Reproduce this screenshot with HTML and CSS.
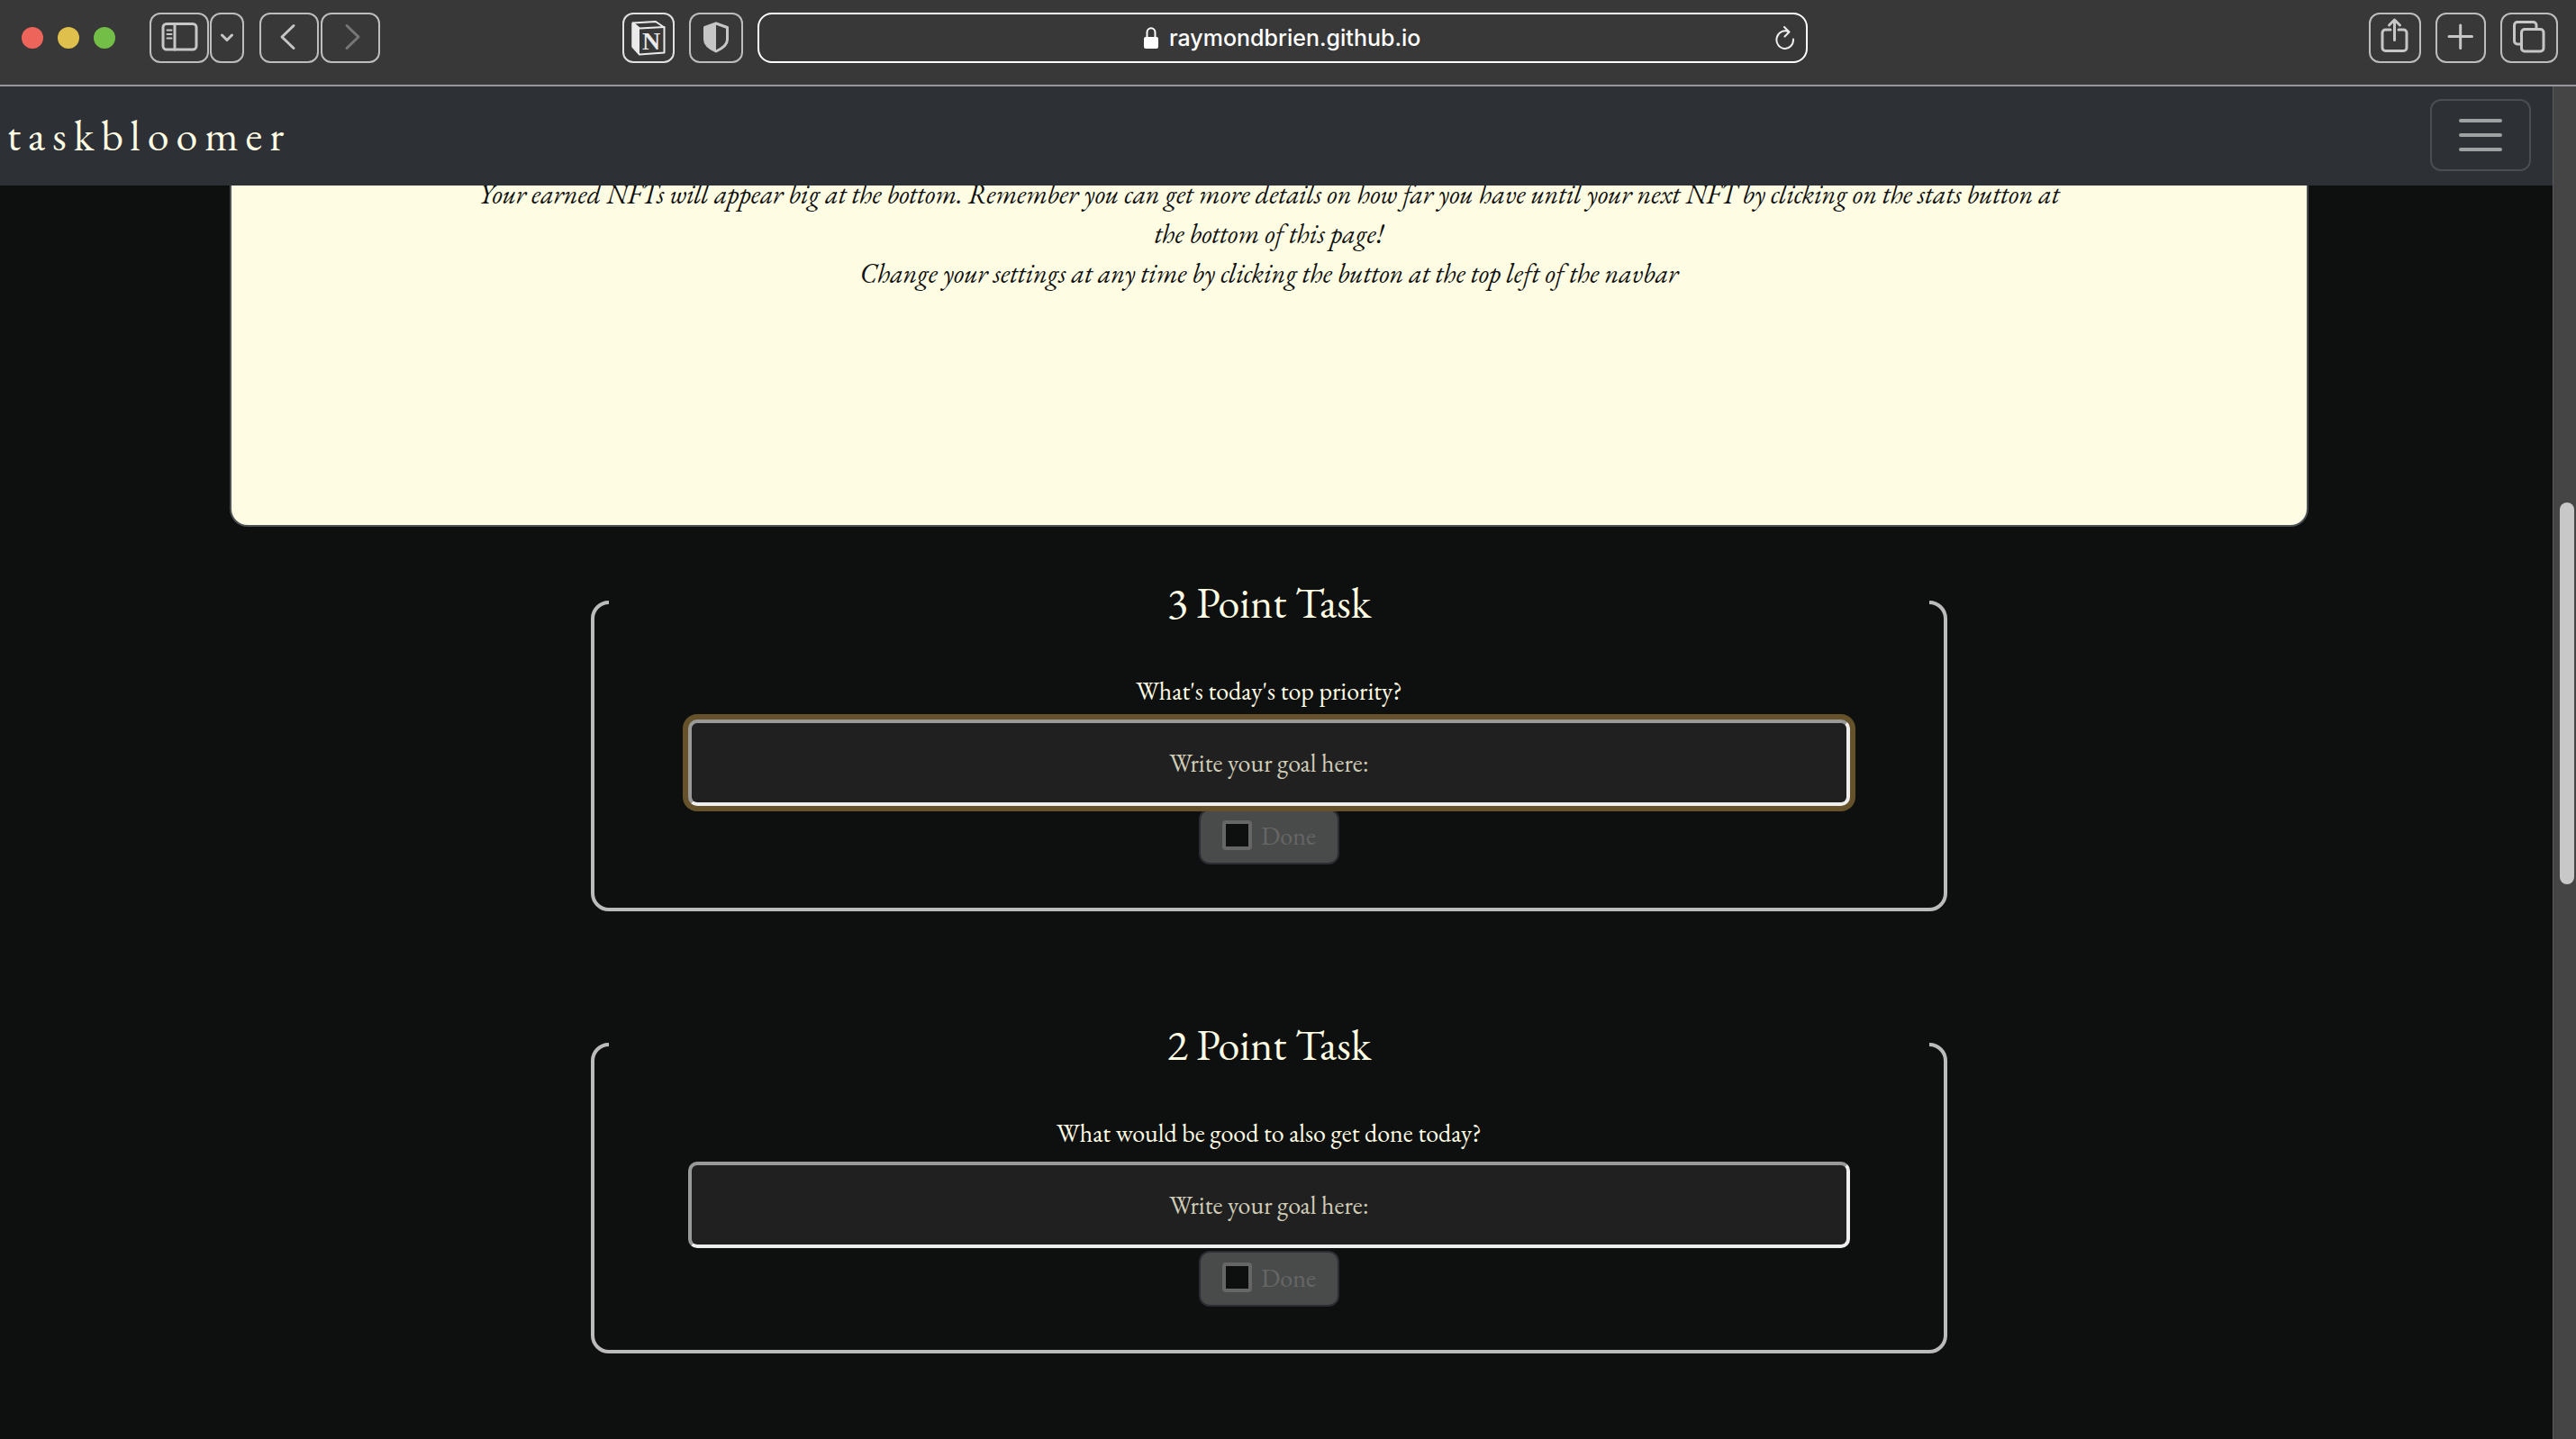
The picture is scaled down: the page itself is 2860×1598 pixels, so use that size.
FILE: index.html
```html
<!DOCTYPE html>
<html lang="en">
<head>
<meta charset="utf-8">
<meta name="viewport" content="width=device-width, initial-scale=1">
<title>taskbloomer</title>
<link rel="stylesheet" href="styles.css">
</head>
<body>
<header class="toolbar">
  <div class="toolbar-group toolbar-start">
    <div class="lights">
      <span class="light light-close"></span>
      <span class="light light-minimise"></span>
      <span class="light light-zoom"></span>
    </div>
    <div class="button-pair sidebar-pair">
      <button class="tool tool-wide" type="button" aria-label="Show sidebar">
        <svg width="62" height="52" viewBox="0 0 62 52"><rect x="13" y="10.500" width="37" height="28.500" rx="4"/><path d="M26 10.500V39"/><path class="thin" d="M17.500 17.500h5M17.500 22h5M17.500 26.500h5"/></svg>
      </button>
      <button class="tool tool-slim" type="button" aria-label="Tab groups">
        <svg width="34" height="52" viewBox="0 0 34 52"><path d="M11.500 23l5.500 5.500 5.500-5.500"/></svg>
      </button>
    </div>
    <div class="button-pair history-pair">
      <button class="tool tool-wide" type="button" aria-label="Back">
        <svg width="62" height="52" viewBox="0 0 62 52"><path d="M36 12.500L23 25l13 12.500"/></svg>
      </button>
      <button class="tool tool-wide tool-off" type="button" aria-label="Forward">
        <svg width="62" height="52" viewBox="0 0 62 52"><path d="M27 12.500L40 25 27 37.500"/></svg>
      </button>
    </div>
  </div>
  <div class="toolbar-group toolbar-centre">
    <button class="tool tool-notion" type="button" aria-label="Notion">
      <svg width="54" height="52" viewBox="0 0 54 52"><path d="M9.500 9.500L35 8l9.500 6.500V42.500L17 44.500 9.500 36z"/><path class="solid" d="M8.500 9.500L17 15v30L8.500 36z"/><path d="M10 9.500l7 6 27.500-1.500"/><text class="notion-n" x="20" y="39">N</text></svg>
    </button>
    <button class="tool tool-shield" type="button" aria-label="Privacy report">
      <svg width="56" height="52" viewBox="0 0 56 52"><path d="M28 10l12.500 4.500V28c0 6-6 10-12.500 13C21.500 38 15.500 34 15.500 28V14.500z"/><path class="solid" d="M28 10v31C21.500 38 15.500 34 15.500 28V14.500z"/></svg>
    </button>
    <form class="address">
      <label class="address-field">
        <svg class="lock" width="16" height="24" viewBox="0 0 16 24" aria-label="Secure"><rect class="solid" x="0" y="11" width="16" height="13" rx="2"/><path d="M3.500 11V6a4.500 4.800 0 0 1 9 0V11"/></svg>
        <input class="address-input" type="text" value="raymondbrien.github.io" aria-label="Address">
      </label>
      <button class="reload" type="button" aria-label="Reload">
        <svg width="22" height="26" viewBox="0 0 22 26"><path d="M20 14.500A9.300 9.800 0 1 1 15 6.500M10 1l5.500 5.500L10.500 11.500"/></svg>
      </button>
    </form>
  </div>
  <div class="toolbar-group toolbar-end">
    <button class="tool tool-share" type="button" aria-label="Share">
      <svg width="54" height="52" viewBox="0 0 54 52"><path d="M22 17h-5.500a3.500 3.500 0 0 0-3.500 3.500V37a3.500 3.500 0 0 0 3.500 3.500h20A3.500 3.500 0 0 0 40 37V20.500a3.500 3.500 0 0 0-3.500-3.500H31M26.500 28.500V6.500M20.500 12l6-6 6 6"/></svg>
    </button>
    <button class="tool tool-plus" type="button" aria-label="New tab">
      <svg width="52" height="52" viewBox="0 0 52 52"><path d="M13 24.500h25.500M25.700 12v25.500"/></svg>
    </button>
    <button class="tool tool-tabs" type="button" aria-label="Tab overview">
      <svg width="60" height="52" viewBox="0 0 60 52"><rect x="21.500" y="16.500" width="24.500" height="24.500" rx="3.500"/><path d="M21 33h-4a3.500 3.500 0 0 1-3.500-3.500V12A3.500 3.500 0 0 1 17 8.500h17.500A3.500 3.500 0 0 1 38 12v4"/></svg>
    </button>
  </div>
</header>

<div class="viewport">
  <div class="page">
    <nav class="navbar">
      <a class="brand" href="#">taskbloomer</a>
      <button class="toggler" type="button" aria-label="Toggle navigation">
        <span class="bar"></span><span class="bar"></span><span class="bar"></span>
      </button>
    </nav>
    <main class="content">
      <section class="intro">
        <p class="intro-text">Your earned NFTs will appear big at the bottom. Remember you can get more details on how far you have until your next NFT by clicking on the stats button at the bottom of this page!</p>
        <p class="intro-text">Change your settings at any time by clicking the button at the top left of the navbar</p>
      </section>

      <form class="tasks">
        <fieldset class="task">
          <legend class="task-title">3 Point Task</legend>
          <div class="task-body">
            <label class="task-label" for="goal-3">What's today's top priority?</label>
            <input class="task-input is-active" id="goal-3" type="text" placeholder="Write your goal here:">
            <label class="done"><input class="done-box" type="checkbox" disabled>Done</label>
          </div>
        </fieldset>
        <fieldset class="task">
          <legend class="task-title">2 Point Task</legend>
          <div class="task-body">
            <label class="task-label" for="goal-2">What would be good to also get done today?</label>
            <input class="task-input" id="goal-2" type="text" placeholder="Write your goal here:">
            <label class="done"><input class="done-box" type="checkbox" disabled>Done</label>
          </div>
        </fieldset>
      </form>
    </main>
  </div>
  <div class="scrollbar"><div class="thumb"></div></div>
</div>
</body>
</html>
```
FILE: styles.css
```css
:root {
  --serif: "EB Garamond", "Liberation Serif", serif;
  --sans: Inter, "Liberation Sans", sans-serif;
  --cream: #fffce4;
  --ink: #0e100f;
  --tool: #bdbdbd;
}

* {
  box-sizing: border-box;
}

body {
  display: flex;
  flex-direction: column;
  height: 100vh;
  margin: 0;
  overflow: hidden;
  background: var(--ink);
  color: var(--cream);
  font-family: var(--serif);
}

button,
input {
  margin: 0;
  padding: 0;
  font: inherit;
}

svg {
  display: block;
  fill: none;
  stroke: currentColor;
  stroke-width: 3;
  stroke-linecap: round;
  stroke-linejoin: round;
}

/* Browser toolbar */
.toolbar {
  display: grid;
  grid-template-columns: 667fr 1316fr 833fr;
  flex: none;
  padding: 14px 20px 24px 24px;
  border-bottom: 2px solid #98959b;
  background: #383838;
}

.toolbar-group {
  display: flex;
  align-items: center;
}

.toolbar-centre,
.toolbar-end {
  gap: 16px;
}

.toolbar-end {
  justify-content: flex-end;
}

.lights {
  display: flex;
  gap: 16px;
}

.light {
  width: 24px;
  height: 24px;
  border-radius: 50%;
}

.light-close {
  background: #ed655a;
}

.light-minimise {
  background: #e0c04c;
}

.light-zoom {
  background: #72be47;
}

.button-pair {
  display: flex;
}

.sidebar-pair {
  gap: 1px;
  margin-left: 38px;
}

.history-pair {
  gap: 2px;
  margin-left: 17px;
}

.tool {
  flex: none;
  height: 56px;
  border: 2px solid var(--tool);
  border-radius: 12px;
  background: none;
  color: #c6c6c6;
}

.tool-off {
  color: #777;
}

.tool-notion {
  border-color: #e0e0e0;
  color: #eaeaea;
}

.solid {
  fill: currentColor;
  stroke: none;
}

.thin {
  stroke-width: 2;
}

.tool-notion svg {
  stroke-width: 2;
}

.notion-n {
  fill: currentColor;
  stroke: none;
  font: bold 28px "Liberation Serif", serif;
}

.address {
  display: grid;
  grid-template-columns: 1fr auto 1fr;
  flex: 1;
  align-items: center;
  height: 56px;
  padding: 0 12px;
  border: 2px solid #fff;
  border-radius: 16px;
  color: #fff;
}

.address-field {
  display: flex;
  grid-column: 2;
  align-items: center;
  gap: 12px;
}

.lock,
.reload svg {
  stroke-width: 2;
}

.address-input {
  width: 280px;
  border: 0;
  background: none;
  color: #fff;
  font: 500 25px/36px var(--sans);
}

.reload {
  justify-self: end;
  border: 0;
  background: none;
  color: #eee;
}

/* Page and its scrollbar */
.viewport {
  display: flex;
  flex: 1;
  min-height: 0;
}

.page {
  flex: 1;
  min-width: 0;
  overflow: hidden;
}

.scrollbar {
  display: grid;
  grid-template-rows: 462fr 424fr 616fr;
  flex: none;
  width: 26px;
  padding: 0 2px 0 7px;
  border-left: 1px solid #5c5c5c;
  background: #454545;
}

.thumb {
  grid-row: 2;
  border-radius: 8px;
  background: #c8c8c8;
}

.navbar {
  position: relative;
  z-index: 1;
  display: flex;
  align-items: center;
  justify-content: space-between;
  height: 110px;
  padding: 0 24px 2px 8px;
  background: #2d3035;
}

.brand {
  color: var(--cream);
  font-size: 48px;
  line-height: 54px;
  letter-spacing: 8px;
  text-decoration: none;
}

.toggler {
  display: flex;
  flex-direction: column;
  align-items: center;
  justify-content: center;
  gap: 12px;
  width: 112px;
  height: 80px;
  border: 2px solid #4b4d52;
  border-radius: 12px;
  background: none;
}

.bar {
  width: 48px;
  height: 4px;
  border-radius: 2px;
  background: #a0a1a3;
}

/* The page is scrolled so the first line sits partly under the navbar */
.content {
  display: flex;
  flex-direction: column;
  align-items: center;
  margin-top: -12px;
  padding-right: 16px;
}

.intro {
  display: flex;
  flex-direction: column;
  align-items: center;
  width: 82%;
  max-width: 2308px;
  padding-bottom: 257px;
  border: 2px solid #4b5154;
  border-top: 0;
  border-radius: 0 0 20px 20px;
  background: var(--cream);
  color: var(--ink);
}

.intro-text {
  max-width: 1780px;
  margin: 0;
  font-size: 30px;
  font-style: italic;
  line-height: 44px;
  text-align: center;
}

.tasks {
  display: flex;
  flex-direction: column;
  gap: 121px;
  width: 54%;
  max-width: 1506px;
  margin-top: 57px;
}

.task {
  min-width: 0;
  margin: 0;
  padding: 53px 16px 48px;
  border: 4px solid #bbb;
  border-radius: 20px;
}

.task-title {
  width: 100%;
  padding: 0;
  font-size: 48px;
  line-height: 54px;
  text-align: center;
}

.task-body {
  display: flex;
  flex-direction: column;
  align-items: center;
  padding: 0 88px;
}

.task-label {
  margin-bottom: 14px;
  font-size: 28px;
  line-height: 36px;
}

.task-input {
  position: relative;
  width: 100%;
  height: 96px;
  border: 4px solid;
  border-color: #999 #eee #eee #999;
  border-radius: 10px;
  background: #202020;
  color: var(--cream);
  font-size: 28px;
  text-align: center;
}

.task-input::placeholder {
  color: #cfccb8;
  opacity: 1;
}

.task-input.is-active {
  z-index: 1;
  box-shadow: 0 0 0 6px #65522a;
}

.task-input:focus {
  outline: 0;
}

.done {
  display: flex;
  align-items: center;
  gap: 10px;
  height: 62px;
  margin-top: 3px;
  padding: 0 24px 3px;
  border: 2px solid #2b2d33;
  border-radius: 12px;
  background: #494b4a;
  color: #666;
  font-size: 28px;
}

.done-box {
  width: 33px;
  height: 33px;
  border: 4px solid #666;
  border-radius: 4px;
  background: var(--ink);
  appearance: none;
}
```
